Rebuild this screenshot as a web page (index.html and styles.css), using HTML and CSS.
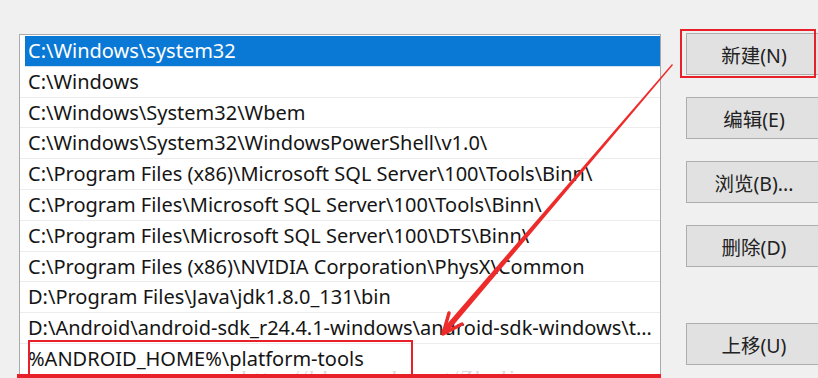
FILE: index.html
```html
<!DOCTYPE html>
<html lang="zh">
<head>
<meta charset="utf-8">
<title>编辑环境变量</title>
<link rel="stylesheet" href="styles.css">
</head>
<body>
<div class="dialog">
  <div class="listbox">
    <div class="row selected">C:\Windows\system32</div>
    <div class="row">C:\Windows</div>
    <div class="row">C:\Windows\System32\Wbem</div>
    <div class="row">C:\Windows\System32\WindowsPowerShell\v1.0\</div>
    <div class="row">C:\Program Files (x86)\Microsoft SQL Server\100\Tools\Binn\</div>
    <div class="row">C:\Program Files\Microsoft SQL Server\100\Tools\Binn\</div>
    <div class="row">C:\Program Files\Microsoft SQL Server\100\DTS\Binn\</div>
    <div class="row">C:\Program Files (x86)\NVIDIA Corporation\PhysX\Common</div>
    <div class="row">D:\Program Files\Java\jdk1.8.0_131\bin</div>
    <div class="row">D:\Android\android-sdk_r24.4.1-windows\android-sdk-windows\tools</div>
    <div class="row">%ANDROID_HOME%\platform-tools</div>
  </div>
  <div class="buttons">
    <div class="btn">新建(N)</div>
    <div class="btn">编辑(E)</div>
    <div class="btn">浏览(B)...</div>
    <div class="btn">删除(D)</div>
    <div class="btn btn-gap">上移(U)</div>
  </div>
</div>
<div class="watermark">http://blog.csdn.net/Zhuliyou</div>
<div class="mark mark-new"></div>
<div class="mark mark-item"></div>
<div class="mark mark-bottom"></div>
<svg class="arrow" width="818" height="378" viewBox="0 0 818 378">
  <polygon points="672,64 673,65 446,334 441,331" fill="#ee2b2b"/>
  <polyline points="462,324 443,334 449,313" fill="none" stroke="#ee2b2b" stroke-width="3.5" stroke-linecap="round" stroke-linejoin="round"/>
</svg>
</body>
</html>
```

FILE: styles.css
```css
html, body {
  margin: 0;
  padding: 0;
}
body {
  width: 818px;
  height: 378px;
  overflow: hidden;
  background: #f0f0f0;
  font-family: "Noto Sans", "Noto Sans CJK SC", sans-serif;
  color: #151515;
  position: relative;
}
.dialog {
  display: flex;
  align-items: flex-start;
  padding: 33px 0 0 19px;
  gap: 25px;
}
.listbox {
  width: 642px;
  height: 345px;
  margin-top: 1px;
  background: #fff;
  border: 1px solid #a9a9a9;
  border-bottom: none;
  padding-top: 1px;
  box-sizing: border-box;
  flex: none;
  overflow: hidden;
}
.row {
  height: 30.8px;
  line-height: 29px;
  box-sizing: border-box;
  border-bottom: 1px solid #ededed;
  padding-left: 8px;
  padding-right: 4px;
  font-size: 20px;
  white-space: nowrap;
  overflow: hidden;
  text-overflow: ellipsis;
}
.row.selected {
  margin-left: 5px;
  padding-left: 3px;
  background: #0a78d5;
  color: #fff;
  border-bottom: 1px solid #cfe3f5;
}
.buttons {
  display: flex;
  flex-direction: column;
  gap: 22px;
  flex: none;
}
.btn {
  width: 138px;
  height: 42px;
  box-sizing: border-box;
  background: #e1e1e1;
  border: 1px solid #adadad;
  display: flex;
  align-items: center;
  justify-content: center;
  font-size: 19.5px;
  color: #222;
  padding-right: 2px;
}
.btn-gap {
  margin-top: 34px;
}
.watermark {
  position: absolute;
  left: 240px;
  top: 366px;
  font-family: "Liberation Serif", serif;
  font-style: italic;
  font-size: 22px;
  line-height: 24px;
  letter-spacing: 2px;
  color: rgba(170, 170, 170, 0.45);
  white-space: nowrap;
}
.mark {
  position: absolute;
  border: 2.5px solid #e8202a;
  box-sizing: border-box;
}
.mark-new {
  left: 680px;
  top: 29px;
  width: 136px;
  height: 49px;
}
.mark-item {
  left: 28px;
  top: 340px;
  width: 385px;
  height: 38px;
  border-bottom: none;
}
.mark-bottom {
  left: 17px;
  top: 374px;
  width: 644px;
  height: 4px;
  border: none;
  background: #e8202a;
}
.arrow {
  position: absolute;
  left: 0;
  top: 0;
  pointer-events: none;
}
```
